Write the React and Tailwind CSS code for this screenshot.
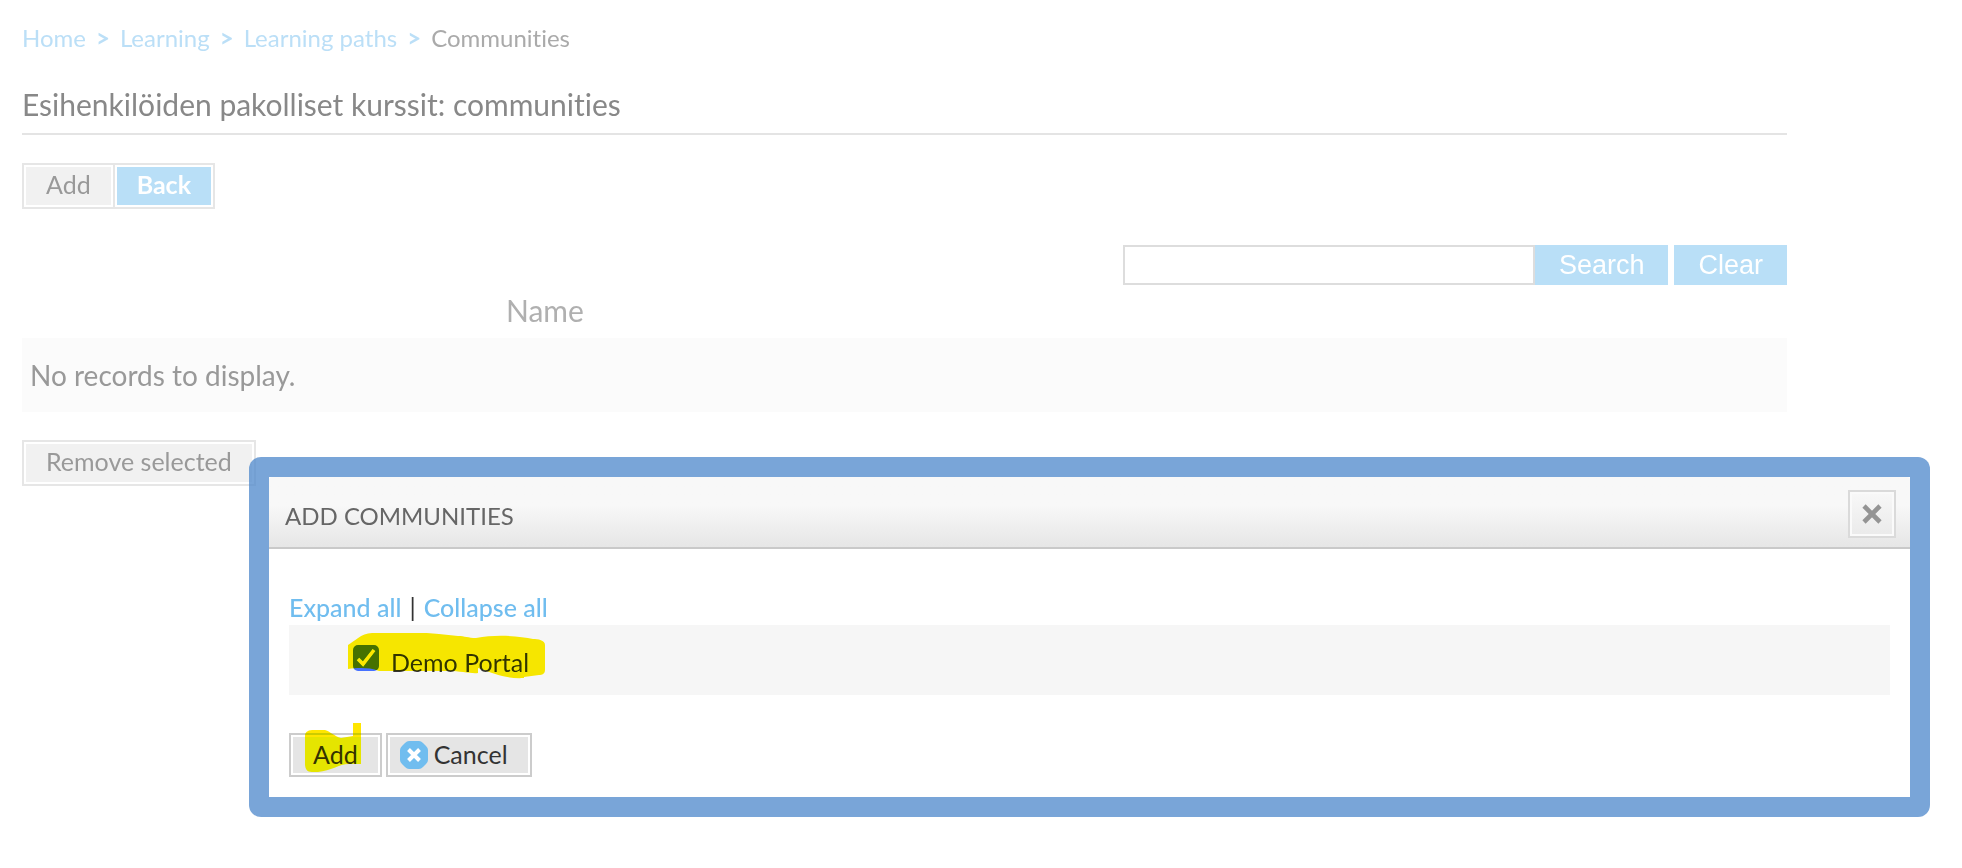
import { useState } from "react";

const crumbs = ["Home", "Learning", "Learning paths"];

function FramedButton({ children, className = "" }) {
  return (
    <button type="button" className={`border-2 border-[#e6e6e6] p-[2px] text-[#999999] ${className}`}>
      <span className="flex h-[38px] items-center bg-[#f1f1f1] px-5 pb-1 text-[25px] leading-7">{children}</span>
    </button>
  );
}

function CloseIcon() {
  return (
    <svg width="20" height="20" viewBox="0 0 20 20" aria-hidden="true">
      <path d="M2 2 18 18M18 2 2 18" stroke="#949494" strokeWidth="4.600" />
    </svg>
  );
}

function CancelIcon() {
  return (
    <svg width="28" height="28" viewBox="0 0 28 28" aria-hidden="true">
      <path d="M9 0h10q2 0 4 2l3 3q2 2 2 4v10q0 2-2 4l-3 3q-2 2-4 2H9q-2 0-4-2l-3-3q-2-2-2-4V9q0-2 2-4l3-3q2-2 4-2z" fill="#70bdef" />
      <path d="m8.500 8.500 11 11m0-11-11 11" stroke="#fff" strokeWidth="4" />
    </svg>
  );
}

function AddCommunities() {
  const [checked, setChecked] = useState(true);

  return (
    <section role="dialog" aria-labelledby="dialog-title" className="absolute top-[457px] right-8 left-[249px] rounded-xl border-20 border-[#4c87cb]/75 bg-white bg-clip-padding">
      <header className="flex h-[72px] items-center justify-between rounded-t-[3px] border-b-2 border-[#c9c9c9] bg-linear-to-b from-[#f8f8f8] from-40% to-[#e6e6e6] pt-1 pr-[14px] pl-4">
        <h2 id="dialog-title" className="pt-1 text-[24px] leading-7 text-[#666666]">ADD COMMUNITIES</h2>
        <button type="button" aria-label="Close" className="flex size-12 items-center justify-center border-2 border-[#dadada] bg-linear-to-b from-[#f8f8f8] to-[#eaeaea] shadow-[inset_0_0_0_2px_#fafafa]">
          <CloseIcon />
        </button>
      </header>

      <div className="px-5 pt-[42px] pb-5 text-[25px] leading-8 text-[#333333]">
        <div className="flex gap-2 pb-[2px]">
          <a href="#expand" className="font-medium text-[#70bdef]">Expand all</a>
          <span>|</span>
          <a href="#collapse" className="font-medium text-[#70bdef]">Collapse all</a>
        </div>

        <div className="relative flex h-[70px] items-center bg-[#f6f6f6] pb-1 pl-16">
          <span className="relative size-[26px]">
            <input id="portal" type="checkbox" checked={checked} onChange={(e) => setChecked(e.target.checked)} className="block size-[26px] appearance-none rounded-[5px] border-2 border-[#767676] bg-white checked:border-[#4671ff] checked:bg-[#4671ff]" />
            {checked && (
              <svg className="pointer-events-none absolute inset-0" width="26" height="26" viewBox="0 0 26 26" aria-hidden="true">
                <path d="m5 14 5 5L21 5" fill="none" stroke="#fff" strokeWidth="3.500" />
              </svg>
            )}
          </span>
          <label htmlFor="portal" className="pt-2 pl-3">Demo Portal</label>
          <svg className="pointer-events-none absolute top-2 left-[59px] mix-blend-darken" width="198" height="46" viewBox="0 0 198 46" aria-hidden="true">
            <path d="M0 12C6 9 13 0 24 0 50-1 72-1 91 1l19 2c7 0 10 2 18 2 20-4 44-2 57 1 5 0 12 1 12 6v25c0 4-3 5-6 5l-15 2v1c-18 1-29-4-46-10v5c-6 1-18-2-29-2H31C20 34 9 35 0 36Z" fill="#ffe600" />
          </svg>
        </div>

        <div className="relative mt-[38px] flex gap-1">
          <button type="button" className="border-2 border-[#cccccc] p-[2px]">
            <span className="flex h-9 items-center bg-[#e5e5e5] px-5 pb-[2px]">Add</span>
          </button>
          <button type="button" className="border-2 border-[#cccccc] p-[2px]">
            <span className="flex h-9 items-center gap-[6px] bg-[#e5e5e5] pr-5 pl-[10px]">
              <CancelIcon />
              <span className="pb-[2px]">Cancel</span>
            </span>
          </button>
          <svg className="pointer-events-none absolute -top-[10px] left-4 mix-blend-darken" width="56" height="50" viewBox="0 0 56 50" aria-hidden="true">
            <path d="M0 13c0-5 4-6 9-6h11c6 2 9 6 16 8l12-2V0h8v41H44c-10 0-18 7-31 8-8 0-12 1-13-7Z" fill="#ffe600" />
          </svg>
        </div>
      </div>
    </section>
  );
}

export default function App() {
  return (
    <div className="relative min-h-screen bg-white font-['Lato',sans-serif] [font-variant-ligatures:none]">
      <main className="pt-[22px] pr-[175px] pl-[22px]">
        <nav aria-label="Breadcrumb" className="flex gap-[10px] text-[24px] leading-8 text-[#aaaaaa]">
          {crumbs.map((name) => (
            <span key={name} className="flex gap-[10px] text-[#bbdff7]">
              <a href="#crumb">{name}</a>
              <span className="font-bold">&gt;</span>
            </span>
          ))}
          <span>Communities</span>
        </nav>

        <h1 className="mt-8 border-b-2 border-[#e4e4e4] pb-[11px] text-[30px] leading-9 text-[#888888]">Esihenkilöiden pakolliset kurssit: communities</h1>

        <div className="mt-7 flex">
          <FramedButton className="border-r-0">Add</FramedButton>
          <button type="button" className="border-2 border-[#e6e6e6] p-[2px] text-white">
            <span className="flex h-[38px] items-center bg-[#b9dff7] px-5 pb-1 text-[25px] leading-7 font-bold">Back</span>
          </button>
        </div>

        <form className="mt-9 flex justify-end font-['Liberation_Sans',sans-serif] text-[27px] leading-8 text-white" onSubmit={(e) => e.preventDefault()}>
          <input type="text" aria-label="Search communities" className="h-10 w-[412px] border-2 border-[#dddddd] px-2 text-[#888888]" />
          <button type="submit" className="h-10 bg-[#b9dff7] px-6">Search</button>
          <button type="reset" className="ml-[6px] h-10 bg-[#b9dff7] px-6">Clear</button>
        </form>

        <table className="w-full text-left">
          <thead>
            <tr className="h-[53px] text-[30px] leading-9 text-[#b0b0b0]">
              <th className="pb-1 pl-[484px] font-normal">Name</th>
            </tr>
          </thead>
          <tbody>
            <tr className="h-[74px] bg-[#fbfbfb] text-[28px] leading-8 text-[#999999]">
              <td className="pl-2">No records to display.</td>
            </tr>
          </tbody>
        </table>

        <FramedButton className="mt-7">Remove selected</FramedButton>
      </main>
      <AddCommunities />
    </div>
  );
}
